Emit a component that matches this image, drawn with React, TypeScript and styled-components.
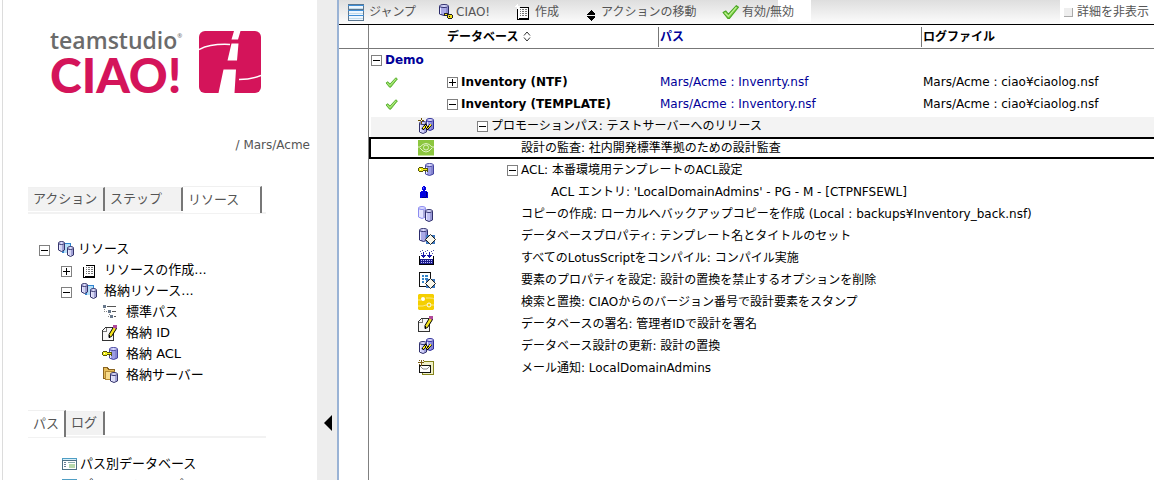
import React, { ReactNode } from 'react';
import styled, { createGlobalStyle, css } from 'styled-components';

const Global = createGlobalStyle`
  *, *::before { box-sizing: border-box; }
  html, body, #root { height: 100%; }
  body { margin: 0; background: #fff; color: #000; overflow: hidden; font: 12px/16px "DejaVu Sans", "Noto Sans CJK JP", sans-serif; }
  button { font: inherit; color: inherit; background: none; border: 0; padding: 0; cursor: pointer; }
  svg { display: block; flex: none; }
`;

/* ---------- icons ---------- */

const Svg = ({ w = 16, h = 16, smooth = false, children }: { w?: number; h?: number; smooth?: boolean; children: ReactNode }) => (
  <svg width={w} height={h} viewBox={`0 0 ${w} ${h}`} shapeRendering={smooth ? 'auto' : 'crispEdges'} aria-hidden="true">{children}</svg>
);

const Cylinder = ({ x, y, w = 7, h = 11, line = '#2b2b6b', fill = '#a9a9e6' }: { x: number; y: number; w?: number; h?: number; line?: string; fill?: string }) => (
  <g shapeRendering="auto">
    <path d={`M${x + 0.5} ${y + 2}v${h - 4}q${(w - 1) / 2} 3 ${w - 1} 0v-${h - 4}`} fill={fill} stroke={line} />
    <path d={`M${x + 1.5} ${y + 4}v${h - 6}`} stroke="#e6e6ff" />
    <path d={`M${x + w - 2} ${y + 4}v${h - 6}`} stroke="#6f6fb8" />
    <ellipse cx={x + w / 2} cy={y + 2} rx={(w - 1) / 2} ry="1.5" fill="#dcdcff" stroke={line} />
  </g>
);

const Key = ({ x, y }: { x: number; y: number }) => (
  <g>
    <path d={`M${x + 1} ${y}h4v1h5v4h-1v-1h-1v1h-1v-1h-2v1h-4v-1h-1v-3h1z`} fill="#55550a" />
    <path d={`M${x + 1} ${y + 1}h4v1h4v1h-4v1h-4z`} fill="#f2ee1c" />
    <path d={`M${x + 2} ${y + 2}h1v1h-1z`} fill="#fff" />
  </g>
);

const Diamond = () => (
  <g>
    <path d="M8 7h9v9h-9z" fill="#3b78c0" />
    <path d="M12.500 6.500l5 5-5 5-5-5z" fill="#f8f6ea" stroke="#222" shapeRendering="auto" />
  </g>
);

const PageIcon = () => (
  <Svg>
    <path d="M2 4h1v12h-1z M13 3h1v13h-1z M2 15h12v1h-12z M5 3h9v1h-9z M4 14h9v1h-9z" fill="#000" />
    <path d="M3 4h10v10h-10z" fill="#fff" />
    <path d="M5 5h1v1h-1z M7 5h2v1h-2z M10 5h2v1h-2z M5 7h1v1h-1z M7 7h2v1h-2z M10 7h2v1h-2z M5 9h1v1h-1z M7 9h2v1h-2z M10 9h2v1h-2z M5 11h1v1h-1z M7 11h2v1h-2z M10 11h2v1h-2z" fill="#777" />
    <path d="M2 0h1v5h-1z M0 2h5v1h-5z M1 1h1v1h-1z M3 3h1v1h-1z" fill="#fff" />
  </Svg>
);

const ListIcon = () => (
  <Svg w={17} h={17}>
    <path d="M0 0h16v17h-16z" fill="#5a7690" />
    <path d="M1 1h14v4h-14z M1 7h14v4h-14z M1 12h14v4h-14z" fill="#eef7ff" />
    <path d="M0 1h16v1h-16z M0 6h16v1h-16z M0 11h16v1h-16z" fill="#3f8ed6" />
    <path d="M1 4h14v1h-14z M1 9h14v1h-14z M1 14h14v1h-14z" fill="#c3dbea" />
  </Svg>
);

const CiaoIcon = () => (
  <Svg>
    <Cylinder x={1} y={0} w={10} h={12} />
    <path d="M6 9h4v1h4v1h1v3h-1v1h-4v-1h-1v-2h-3z" fill="#222" />
    <path d="M7 10h2v1h-2z" fill="#ffe81a" />
    <path d="M10 11h4v3h-4z" fill="#f4e21a" /><path d="M11 12h1v1h-1z" fill="#000" />
  </Svg>
);

const UpDownIcon = () => (
  <Svg w={8} h={18}>
    <path d="M4 7l4 4v1h-8v-1z M0 13h8v1l-4 4-4-4z" fill="#000" />
  </Svg>
);

const Check = ({ w, h }: { w: number; h: number }) => (
  <svg width={w} height={h} viewBox="0 0 16 14" aria-hidden="true">
    <path d="M1 7.500l2.500-1.500 2.500 3 7.500-8 2 1.500-8.500 10.500h-1.500z" fill="#83d44b" stroke="#4aa524" strokeLinejoin="round" />
    <path d="M2.500 7.500l3.500 3.500 7.500-8.500" fill="none" stroke="#c4f29b" />
  </svg>
);

const DbPair = () => (
  <Svg>
    <path d="M4 2h9v10h-9z" fill="#2f83cf" /><path d="M6 3h6v9h-6z" fill="#b8dff8" />
    <Cylinder x={0} y={0} w={7} h={11} line="#33336b" fill="#d5d5f2" />
    <Cylinder x={9} y={5} w={7} h={11} line="#33336b" fill="#d5d5f2" />
  </Svg>
);

const PathIcon = () => (
  <Svg>
    <path d="M1 1h3v3h-3z M6 6h3v3h-3z M8 11h3v3h-3z" fill="#68788c" />
    <path d="M5 2h9v1h-9z M10 7h4v1h-4z M12 12h2v1h-2z" fill="#555" />
    <path d="M2 5h1v1h-1z M2 7h1v1h-1z M4 7h1v1h-1z M7 10h1v1h-1z M6 12h1v1h-1z" fill="#888" />
  </Svg>
);

const SignIcon = () => (
  <Svg>
    <path d="M.5 5.500l3-3h8v13h-11z" fill="#f7f7f7" stroke="#333" />
    <path d="M1 6h3v-3" fill="none" stroke="#777" />
    <path d="M7 12.500v-3l4.500-7.500 3 1.500-5 8z" fill="#f3e21b" stroke="#000" shapeRendering="auto" />
    <path d="M11 0h4v3h-1v1h-1v-1h-2z" fill="#b04a9c" />
    <path d="M7 10h1v3h-1z" fill="#000" />
  </Svg>
);

const AclIcon = () => (
  <Svg>
    <Cylinder x={7} y={1} w={9} h={13} line="#4343a0" fill="#9c9ce4" />
    <Key x={0} y={5} />
  </Svg>
);

const ServerIcon = () => (
  <Svg>
    <path d="M1.500.5h4l1 2h6v9h-11z" fill="#e6bd5a" stroke="#8a6420" />
    <path d="M3.500 4.500h9v8h-9z" fill="#f8dc8c" stroke="#b58a34" />
    <Cylinder x={8} y={5} w={8} h={11} line="#33336b" fill="#dcdcf6" />
  </Svg>
);

const ViewIcon = () => (
  <Svg w={15} h={12}>
    <path d="M0 0h15v12h-15z" fill="#4c6f84" />
    <path d="M1 3h13v8h-13z" fill="#fff" /><path d="M0 0h15v2h-15z" fill="#4f9ec4" /><path d="M1 1h13v1h-13z" fill="#d7eef8" />
    <path d="M2 4h2v1h-2z M2 6h2v1h-2z M2 8h2v1h-2z" fill="#6c8096" /><path d="M6 4h7v1h-7z" fill="#8aa" /><path d="M7 6h6v4h-6z" fill="#b7d9ad" />
  </Svg>
);

const ReplaceDesign = ({ star = false }: { star?: boolean }) => (
  <Svg>
    <Cylinder x={8} y={0} w={8} h={13} line="#30309a" fill="#9c9cec" />
    <Cylinder x={1} y={3} w={8} h={13} line="#30306c" fill="#d0d0fa" />
    <path d="M4.500 11.500l3-4 2 3 3.500-4" fill="none" stroke="#000" strokeWidth="2.500" shapeRendering="auto" />
    <path d="M4.500 11.500l3-4 2 3 3.500-4" fill="none" stroke="#ffee18" />
    {star && <path d="M3 0h1v2h2v1h-2v3h-1v-3h-3v-1h3z" fill="#6e5200" />}
    {star && <path d="M3 2h1v1h-1z" fill="#fff" />}
  </Svg>
);

const AuditIcon = () => (
  <Svg smooth>
    <path d="M0 0h16v15.500h-16z" fill="#8cc63f" />
    <path d="M0 7h2q6-7 12 0h2M2 8q6 8 12 0" fill="none" stroke="#dff2c4" />
    <circle cx="8" cy="7.500" r="2.500" fill="none" stroke="#dff2c4" />
  </Svg>
);

const PersonIcon = () => (
  <Svg w={8} h={13}>
    <path d="M3 0h2v1h1v3h-1v1h2v1h1v6h-8v-6h1v-1h2v-1h-1v-3h1z" fill="#0000e0" />
    <path d="M3 1h1v2h-1z" fill="#5a5aff" /><path d="M6 6h1v5h-1z M2 11h4v1h-4z" fill="#00007c" />
  </Svg>
);

const CopyIcon = () => (
  <Svg>
    <Cylinder x={0} y={0} w={8} h={13} line="#8c8cf0" fill="#e6e6ff" />
    <Cylinder x={7} y={3} w={8} h={13} line="#30306c" fill="#c3c3f4" />
  </Svg>
);

const DbPropIcon = () => (
  <Svg w={18} h={17}><Cylinder x={1} y={0} w={9} h={14} /><Diamond /></Svg>
);

const CompileIcon = () => (
  <Svg>
    <path d="M1 6h1v9h-1z M15 6h1v9h-1z M1 14h15v1h-15z" fill="#000" />
    <path d="M2 9h13v5h-13z" fill="#1c1c8c" />
    <path d="M3 10h1v1h-1z M5 10h1v1h-1z M7 10h1v1h-1z M9 10h1v1h-1z M11 10h1v1h-1z M13 10h1v1h-1z M3 12h1v1h-1z M5 12h1v1h-1z M7 12h1v1h-1z M9 12h1v1h-1z M11 12h1v1h-1z M13 12h1v1h-1z" fill="#b9b9ff" />
    <path d="M5 2h1v3h2v1h-1v1h-1v1h-1v-1h-1v-1h-1v-1h2z M11 2h1v3h2v1h-1v1h-1v1h-1v-1h-1v-1h-1v-1h2z" fill="#1515a8" />
    <path d="M2 1h1v1h-1z M4 0h1v1h-1z M7 1h1v1h-1z M9 0h1v1h-1z M13 1h1v1h-1z M15 0h1v1h-1z M14 3h1v1h-1z M8 3h1v1h-1z M3 3h1v1h-1z" fill="#5050a8" />
  </Svg>
);

const ElementPropIcon = () => (
  <Svg w={18} h={17}>
    <path d="M1.500.5h11v14h-11z" fill="#fff" stroke="#111" />
    <path d="M4 3h2v2h-2z M4 6h2v2h-2z M4 9h2v2h-2z M7 3h3v2h-3z M7 6h3v2h-3z" fill="#3384c8" />
    <Diamond />
  </Svg>
);

const FindIcon = () => (
  <Svg smooth>
    <path d="M1 0h14l1 1v14l-1 1h-14l-1-1v-14z" fill="#f5cf00" />
    <circle cx="5" cy="5" r="2" fill="#fff" /><circle cx="11" cy="11" r="2" fill="none" stroke="#fff" />
    <path d="M0 6h3M8 4h4q3 0 4 1M0 12h5q2-1 4-1M13 11h3" fill="none" stroke="#fbe98a" />
  </Svg>
);

const MailIcon = () => (
  <Svg>
    <path d="M5 1h11v14h-12v-3h-2" fill="#f0f0c8" /><path d="M5.500 1.500h10v13h-11v-3" fill="none" stroke="#85851c" />
    <path d="M1.500 5.500h11v7h-11z" fill="#fff" stroke="#111" />
    <path d="M2 6l3 3h4l3-3" fill="none" stroke="#888" shapeRendering="auto" />
    <path d="M3 0h1v2h2v1h-2v3h-1v-3h-3v-1h3z M1 0h1v1h-1z M5 0h1v1h-1z M1 4h1v1h-1z" fill="#7a5a10" />
  </Svg>
);

const SortIcon = () => (
  <Svg w={8} h={11} smooth><path d="M1 4.500l3-3.500 3 3.500M1 6.500l3 3.500 3-3.500" fill="none" stroke="#333" /></Svg>
);

const LogoMark = () => (
  <Svg w={62} h={62} smooth>
    <rect width="62" height="62" rx="6" fill="#d4145a" />
    <path d="M35 0h6.500l-2.500 8.500h-6.500z M32.500 12.500h7l-1.500 17h-9.500z M24.500 38.500h12.500l-1.500 23.500h-16z" fill="#fff" />
    <path d="M0 18.500q12-6 31-5M40 48.500q12 0 22-4" fill="none" stroke="#fff" strokeWidth="1.500" />
  </Svg>
);

/* ---------- shell ---------- */

const Shell = styled.div`
  display: grid;
  grid-template-columns: 317px 20px minmax(0, 1fr);
  height: 100vh;
`;

const Sidebar = styled.aside`
  margin-left: 2px;
  border-left: 1px solid #dcdcdc;
  overflow: hidden;
  color: #000;
  font-size: 13px;
`;

const Brand = styled.header`
  display: flex;
  justify-content: space-between;
  margin: 26px 56px 0 47px;
  height: 70px;
`;

const BrandText = styled.div`
  color: #d4145a;
  font: 900 48px/42px "Lato Black", Lato, sans-serif;
`;

const BrandName = styled.div`
  display: flex;
  color: #6b6b6b;
  font: 600 23px/28px "Open Sans", sans-serif;
  sup { font-size: 6px; line-height: 20px; }
`;

const MarkBox = styled.div`padding-top: 5px;`;

const ServerName = styled.div`
  margin: 40px 7px 0 0;
  text-align: right;
  font-size: 12px;
  line-height: 18px;
  color: #555;
`;

const Tabs = styled.div<{ $gap: number }>`
  display: flex;
  align-items: flex-end;
  width: 238px;
  height: 28px;
  margin: ${p => p.$gap}px 0 0 25px;
  border-bottom: 2px solid #f2f2f2;
`;

const Tab = styled.button<{ $active?: boolean; $width: number }>`
  width: ${p => p.$width}px;
  height: ${p => (p.$active ? 27 : 24)}px;
  margin-bottom: ${p => (p.$active ? -1 : 1)}px;
  padding: 0 0 1px 5px;
  text-align: left;
  line-height: 20px;
  white-space: nowrap;
  color: #555;
  background: ${p => (p.$active ? '#fff' : '#f2f2f2')};
  border-right: 2px solid #777;
  border-top: 1px solid #f0f0f0;
`;

const ToggleBox = styled.button`
  flex: none;
  width: 11px;
  height: 11px;
  border: 1px solid #808080;
  background: #fff;
`;

const Tree = styled.ul<{ $gap: number }>`
  list-style: none;
  margin: ${p => p.$gap}px 0 0;
  padding: 0;
  ${ToggleBox} { margin-top: 4px; }
`;

const TreeItem = styled.li<{ $indent: number; $gap?: number }>`
  display: flex;
  align-items: center;
  gap: ${p => p.$gap ?? 8}px;
  height: 21px;
  padding-left: ${p => p.$indent}px;
  line-height: 20px;
  white-space: nowrap;
  ${ToggleBox} + svg { margin-left: ${p => (p.$gap ? 4 : 1)}px; margin-right: ${p => (p.$gap ? 0 : -1)}px; }
`;

const Toggle = ({ open }: { open: boolean }) => (
  <ToggleBox aria-label={open ? 'Collapse' : 'Expand'} aria-expanded={open}>
    <Svg w={9} h={9}><path d={open ? 'M1 4h7v1h-7z' : 'M1 4h7v1h-7z M4 1h1v7h-1z'} fill="#000" /></Svg>
  </ToggleBox>
);

const Splitter = styled.button`
  display: flex;
  justify-content: flex-end;
  padding: 415px 5px 0 0;
  background: #ededed;
  align-items: flex-start;
`;

const Main = styled.main`
  display: flex;
  flex-direction: column;
  border-left: 2px solid #9ab3d5;
  overflow: hidden;
`;

const Toolbar = styled.div`
  display: flex;
  height: 25px;
  padding-left: 9px;
  color: #555;
  background: linear-gradient(#dedede, #fafafa 22px);
  border-bottom: 1px solid #000;
`;

const Tool = styled.button<{ $width: number; $gap: number }>`
  display: flex;
  align-items: center;
  gap: ${p => p.$gap}px;
  width: ${p => p.$width}px;
  height: 24px;
  line-height: 22px;
  white-space: nowrap;
  span { padding-bottom: 1px; }
`;

const EnableTool = styled(Tool)`
  background: linear-gradient(90deg, transparent 56px, #fff 56px) no-repeat 0 0 / 89px 22px;
`;

const HideDetails = styled(Tool)`
  margin-left: auto;
  padding-left: 4px;
  background: #fff;
`;

const HideMark = styled.i`
  width: 9px;
  height: 9px;
  background: #eee;
  border: solid #aaa;
  border-width: 0 1px 1px 0;
`;

const Content = styled.div`
  display: flex;
  flex: 1;
  min-height: 0;
`;

const Gutter = styled.div`
  flex: none;
  width: 30px;
  border-right: 1px solid #808080;
  &::before { content: ''; display: block; height: 24px; border-bottom: 1px solid #777; }
`;

const Grid = styled.table`
  flex: 1;
  width: 0;
  height: max-content;
  table-layout: fixed;
  border-collapse: separate;
  border-spacing: 0;
`;

const HeadCell = styled.th<{ $blue?: boolean; $rule?: boolean }>`
  height: 24px;
  padding: 0 0 0 2px;
  text-align: left;
  font-weight: 700;
  line-height: 20px;
  color: ${p => (p.$blue ? '#000099' : '#000')};
  border-bottom: 1px solid #777;
  background: ${p => (p.$rule ? 'linear-gradient(#777, #777) no-repeat 0 2px / 1px 20px' : 'none')};
`;

const HeadLabel = styled.span`
  display: flex;
  align-items: center;
  gap: 5px;
`;

const Row = styled.tr<{ $shade?: boolean; $selected?: boolean }>`
  td {
    height: 22px;
    padding: 0;
    ${p => p.$shade && css`background: linear-gradient(#f3f3f3, #f3f3f3) no-repeat 0 2px / 100% 20px;`}
    ${p => p.$selected && css`border: solid #000; border-width: 2px 0;`}
  }
  td:first-child {
    ${p => p.$shade && css`background-position: 2px 2px;`}
    ${p => p.$selected && css`border-left-width: 2px;`}
  }
`;

const Cell = styled.div<{ $indent?: number; $bold?: boolean; $blue?: boolean }>`
  display: flex;
  align-items: center;
  gap: 3px;
  height: 18px;
  padding-left: ${p => p.$indent ?? 0}px;
  line-height: 18px;
  white-space: nowrap;
  font-weight: ${p => (p.$bold ? 700 : 400)};
  color: ${p => (p.$blue ? '#000099' : '#000')};
`;

const IconSlot = styled.div<{ $left: number }>`
  display: flex;
  align-items: center;
  height: 18px;
  padding-left: ${p => p.$left}px;
`;

interface Step { icon: ReactNode; text: string; indent: number; toggle?: boolean; shade?: boolean; selected?: boolean; left?: number }

const steps: Step[] = [
  { icon: <ReplaceDesign star />, text: 'プロモーションパス: テストサーバーへのリリース', indent: 32, toggle: true, shade: true },
  { icon: <AuditIcon />, text: '設計の監査: 社内開発標準準拠のための設計監査', indent: 76, selected: true, left: 47 },
  { icon: <AclIcon />, text: 'ACL: 本番環境用テンプレートのACL設定', indent: 62, toggle: true },
  { icon: <PersonIcon />, text: "ACL エントリ: 'LocalDomainAdmins' - PG - M - [CTPNFSEWL]", indent: 106, left: 51 },
  { icon: <CopyIcon />, text: 'コピーの作成: ローカルへバックアップコピーを作成 (Local : backups¥Inventory_back.nsf)', indent: 76 },
  { icon: <DbPropIcon />, text: 'データベースプロパティ: テンプレート名とタイトルのセット', indent: 76 },
  { icon: <CompileIcon />, text: 'すべてのLotusScriptをコンパイル: コンパイル実施', indent: 76 },
  { icon: <ElementPropIcon />, text: '要素のプロパティを設定: 設計の置換を禁止するオプションを削除', indent: 76 },
  { icon: <FindIcon />, text: '検索と置換: CIAOからのバージョン番号で設計要素をスタンプ', indent: 76 },
  { icon: <SignIcon />, text: 'データベースの署名: 管理者IDで設計を署名', indent: 76 },
  { icon: <ReplaceDesign />, text: 'データベース設計の更新: 設計の置換', indent: 76 },
  { icon: <MailIcon />, text: 'メール通知: LocalDomainAdmins', indent: 76 },
];

const databases = [
  { name: 'Inventory (NTF)', path: 'Mars/Acme : Invenrty.nsf', log: 'Mars/Acme : ciao¥ciaolog.nsf', open: false },
  { name: 'Inventory (TEMPLATE)', path: 'Mars/Acme : Inventory.nsf', log: 'Mars/Acme : ciao¥ciaolog.nsf', open: true },
];

export default function App() {
  return (
    <>
      <Global />
      <Shell>
        <Sidebar>
          <Brand>
            <BrandText>
              <BrandName>teamstudio<sup>®</sup></BrandName>
              CIAO!
            </BrandText>
            <MarkBox><LogoMark /></MarkBox>
          </Brand>
          <ServerName>/ Mars/Acme</ServerName>
          <Tabs $gap={32}>
            <Tab $width={77}>アクション</Tab>
            <Tab $width={78}>ステップ</Tab>
            <Tab $width={79} $active>リソース</Tab>
          </Tabs>
          <Tree $gap={24}>
            <TreeItem $indent={36} $gap={4}><Toggle open /><DbPair />リソース</TreeItem>
            <TreeItem $indent={58}><Toggle open={false} /><PageIcon />リソースの作成...</TreeItem>
            <TreeItem $indent={58}><Toggle open /><DbPair />格納リソース...</TreeItem>
            <TreeItem $indent={99}><PathIcon />標準パス</TreeItem>
            <TreeItem $indent={99}><SignIcon />格納 ID</TreeItem>
            <TreeItem $indent={99}><AclIcon />格納 ACL</TreeItem>
            <TreeItem $indent={99}><ServerIcon />格納サーバー</TreeItem>
          </Tree>
          <Tabs $gap={25}>
            <Tab $width={38} $active>パス</Tab>
            <Tab $width={39}>ログ</Tab>
          </Tabs>
          <Tree $gap={15}>
            <TreeItem $indent={59} $gap={3}><ViewIcon />パス別データベース</TreeItem>
            <TreeItem $indent={59} $gap={3}><ViewIcon />プロモーションパス</TreeItem>
          </Tree>
        </Sidebar>
        <Splitter aria-label="Collapse sidebar">
          <Svg w={9} h={16} smooth><path d="M9 0v16l-8-8z" fill="#000" /></Svg>
        </Splitter>
        <Main>
          <Toolbar>
            <Tool $width={90} $gap={4}><ListIcon /><span>ジャンプ</span></Tool>
            <Tool $width={77} $gap={2}><CiaoIcon /><span>CIAO!</span></Tool>
            <Tool $width={72} $gap={4}><PageIcon /><span>作成</span></Tool>
            <Tool $width={135} $gap={6}><UpDownIcon /><span>アクションの移動</span></Tool>
            <EnableTool $width={89} $gap={3}><Check w={17} h={16} /><span>有効/無効</span></EnableTool>
            <HideDetails $width={94} $gap={4}><HideMark /><span>詳細を非表示</span></HideDetails>
          </Toolbar>
          <Content>
            <Gutter />
            <Grid>
              <colgroup>
                <col style={{ width: 76 }} /><col style={{ width: 213 }} /><col style={{ width: 263 }} /><col />
              </colgroup>
              <thead>
                <tr>
                  <HeadCell />
                  <HeadCell><HeadLabel>データベース<SortIcon /></HeadLabel></HeadCell>
                  <HeadCell $blue $rule>パス</HeadCell>
                  <HeadCell $rule>ログファイル</HeadCell>
                </tr>
              </thead>
              <tbody>
                <Row><td colSpan={4}><Cell $indent={2} $bold $blue><Toggle open />Demo</Cell></td></Row>
                {databases.map(d => (
                  <Row key={d.name}>
                    <td><IconSlot $left={16}><Check w={13} h={11} /></IconSlot></td>
                    <td><Cell $indent={2} $bold><Toggle open={d.open} />{d.name}</Cell></td>
                    <td><Cell $indent={2} $blue>{d.path}</Cell></td>
                    <td><Cell $indent={2}>{d.log}</Cell></td>
                  </Row>
                ))}
                {steps.map(s => (
                  <Row key={s.text} $shade={s.shade} $selected={s.selected}>
                    <td><IconSlot $left={s.left ?? 49}>{s.icon}</IconSlot></td>
                    <td colSpan={3}><Cell $indent={s.indent}>{s.toggle && <Toggle open />}{s.text}</Cell></td>
                  </Row>
                ))}
              </tbody>
            </Grid>
          </Content>
        </Main>
      </Shell>
    </>
  );
}
